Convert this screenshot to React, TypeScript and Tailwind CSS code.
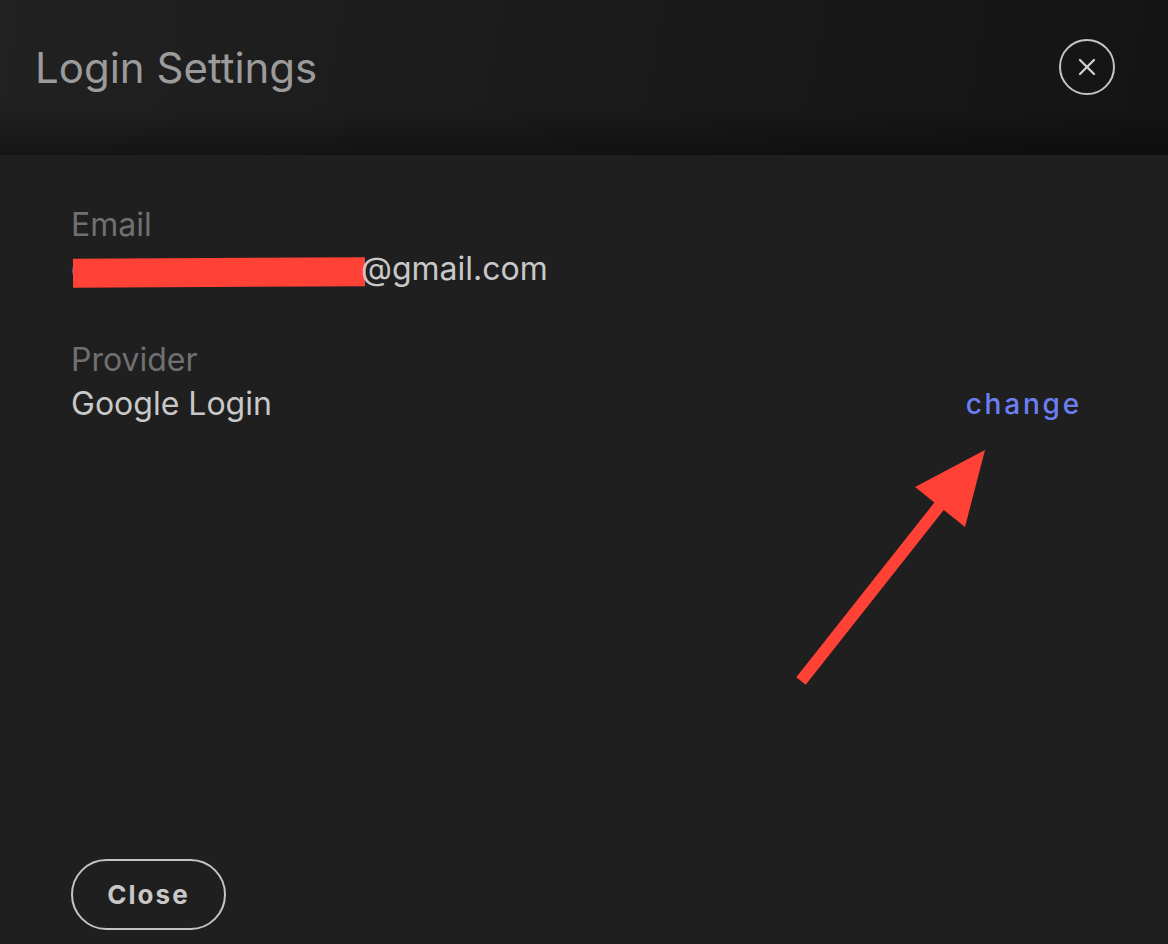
import { X } from 'lucide-react';

// Red annotation arrow pointing up-right at the "change" link
function PointerArrow() {
  return (
    <svg
      className="pointer-events-none absolute left-0 top-0"
      width="1168"
      height="944"
      viewBox="0 0 1168 944"
    >
      <line x1="801" y1="681" x2="944" y2="500" stroke="#ff4136" strokeWidth="12" />
      <polygon points="985,450 915,487 965,527" fill="#ff4136" />
    </svg>
  );
}

function Field({ label, children }: { label: string; children: React.ReactNode }) {
  return (
    <div className="flex flex-col">
      <span className="text-[32px] leading-[44px] text-[#707070]">{label}</span>
      {children}
    </div>
  );
}

export default function App() {
  return (
    <div
      className="relative flex h-[944px] w-[1168px] flex-col overflow-hidden bg-[#1f1f1f]"
      style={{ fontFamily: 'Inter, "Noto Sans", sans-serif' }}
    >
      {/* header */}
      <header className="flex h-[155px] shrink-0 items-start justify-between bg-[linear-gradient(to_bottom,rgba(0,0,0,0)_70%,rgba(0,0,0,0.35)),linear-gradient(100deg,#212121,#141414)] pl-[35px] pr-[53px] pt-[42px]">
        <h1 className="text-[42px] leading-[52px] text-[#9b9b9b]">Login Settings</h1>
        <button className="mt-[-3px] flex h-[56px] w-[56px] items-center justify-center rounded-full border-2 border-[#c4c4c4] text-[#d0d0d0]">
          <X size={28} strokeWidth={2} />
        </button>
      </header>

      {/* body */}
      <main className="flex flex-1 flex-col pl-[71px] pr-[86px]">
        <div className="flex flex-col gap-[47px] pt-[48px]">
          <Field label="Email">
            <div className="flex items-center text-[32px] leading-[44px] text-[#c8c8c8]">
              <span className="relative inline-block w-[290px]">
                <span>c</span>
                <span className="absolute left-[2px] top-[11px] h-[29px] w-[292px] -rotate-[0.3deg] bg-[#ff4136]" />
              </span>
              <span className="relative">@gmail.com</span>
            </div>
          </Field>

          <Field label="Provider">
            <div className="flex items-center justify-between">
              <span className="text-[32px] leading-[44px] text-[#c8c8c8]">Google Login</span>
              <button className="text-[28px] font-medium tracking-[0.1em] text-[#6b7ff3]">change</button>
            </div>
          </Field>
        </div>

        <div className="mt-auto pb-[14px]">
          <button className="flex h-[71px] w-[155px] items-center justify-center rounded-full border-2 border-[#c4c4c4] text-[26px] font-bold tracking-[0.08em] text-[#c8c8c8]">
            Close
          </button>
        </div>
      </main>

      <PointerArrow />
    </div>
  );
}
